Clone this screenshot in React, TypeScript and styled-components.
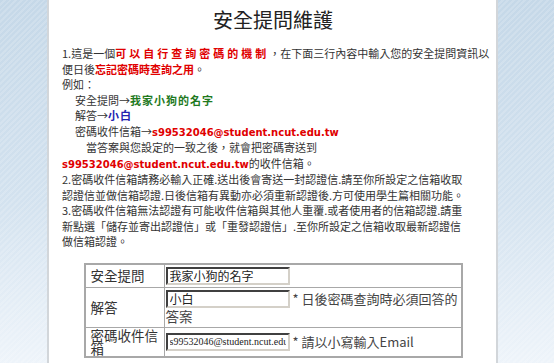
import React from 'react';
import styled, { createGlobalStyle } from 'styled-components';

const GlobalStyle = createGlobalStyle`
  html, body {
    margin: 0;
    padding: 0;
  }
  body {
    font-family: "Noto Sans CJK TC", "Liberation Sans", sans-serif;
    color: #333;
  }
`;

const Page = styled.div`
  min-height: 100vh;
  box-sizing: border-box;
  padding-left: 47px;
  display: flex;
  background:
    repeating-linear-gradient(-45deg, rgba(255, 255, 255, 0.16) 0 2px, rgba(255, 255, 255, 0) 2px 4px),
    linear-gradient(to bottom, #c5d8e8 0%, #d3e2ef 55%, #eef4fa 100%);
`;

const Panel = styled.div`
  width: 451px;
  min-height: 100vh;
  background: #fff;
  border-left: 2px solid #d2d6da;
  border-right: 2px solid #d2d6da;
  box-sizing: border-box;
  padding: 8px 12px 0 13px;
`;

const Title = styled.h1`
  margin: 0 0 14px;
  text-align: center;
  font-size: 20px;
  font-weight: 400;
  line-height: 24px;
  color: #222;
`;

const Notes = styled.div`
  font-size: 11px;
  line-height: 15.5px;
  color: #333;
`;

const Line = styled.div<{ indent?: number }>`
  white-space: nowrap;
  padding-left: ${({ indent }) => indent || 0}px;
`;

const Mark = styled.span<{ color: string; spacing?: number }>`
  color: ${({ color }) => color};
  font-weight: 700;
  letter-spacing: ${({ spacing }) => spacing || 0}px;
`;

const Email = styled.span`
  color: #e00000;
  font-family: "DejaVu Sans", sans-serif;
  font-weight: 700;
  font-size: 10px;
`;

const FormTable = styled.table`
  margin: 13px auto 0;
  width: 379px;
  border-collapse: collapse;
  border: 2px solid #a8a8a8;
  font-size: 13.5px;
  color: #333;
`;

const Label = styled.td`
  width: 68px;
  border: 1px solid #a8a8a8;
  padding: 1px 5px;
  line-height: 13px;
  vertical-align: middle;
`;

const Field = styled.td`
  border: 1px solid #a8a8a8;
  padding: 2px 1px;
  line-height: 18px;
  color: #444;
  font-size: 13px;
  white-space: nowrap;
`;

const Input = styled.input<{ small?: boolean }>`
  width: 124px;
  height: 18px;
  box-sizing: border-box;
  margin: 0 3px 0 0;
  padding: 0 2px;
  vertical-align: top;
  border-style: solid;
  border-width: 2px;
  border-color: #404040 #d4d0c8 #d4d0c8 #404040;
  background: #fff;
  color: #222;
  font-family: ${({ small }) => (small ? '"Liberation Serif", serif' : '"Noto Sans CJK TC", sans-serif')};
  font-size: ${({ small }) => (small ? '10px' : '12px')};
`;

const Wrap = styled.div`
  font-size: 13.5px;
  line-height: 17px;
`;

const App: React.FC = () => (
  <Page>
    <GlobalStyle />
    <Panel>
      <Title>安全提問維護</Title>
      <Notes>
        <Line>
          1.這是一個<Mark color="#e00000" spacing={3}>可以自行查詢密碼的機制</Mark>，在下面三行內容中輸入您的安全提問資訊以
        </Line>
        <Line>
          便日後<Mark color="#e00000">忘記密碼時查詢之用</Mark>。
        </Line>
        <Line>例如：</Line>
        <Line indent={13}>
          安全提問→<Mark color="#1f7a1f" spacing={1}>我家小狗的名字</Mark>
        </Line>
        <Line indent={13}>
          解答→<Mark color="#2222b0" spacing={1}>小白</Mark>
        </Line>
        <Line indent={13}>
          密碼收件信箱→<Email>s99532046@student.ncut.edu.tw</Email>
        </Line>
        <Line indent={24}>當答案與您設定的一致之後，就會把密碼寄送到</Line>
        <Line>
          <Email>s99532046@student.ncut.edu.tw</Email>的收件信箱。
        </Line>
        <Line>2.密碼收件信箱請務必輸入正確.送出後會寄送一封認證信.請至你所設定之信箱收取</Line>
        <Line>認證信並做信箱認證.日後信箱有異動亦必須重新認證後.方可使用學生篇相關功能。</Line>
        <Line>3.密碼收件信箱無法認證有可能收件信箱與其他人重覆.或者使用者的信箱認證.請重</Line>
        <Line>新點選「儲存並寄出認證信」或「重發認證信」.至你所設定之信箱收取最新認證信</Line>
        <Line>做信箱認證。</Line>
      </Notes>
      <FormTable>
        <tbody>
          <tr>
            <Label>安全提問</Label>
            <Field>
              <Input defaultValue="我家小狗的名字" />
            </Field>
          </tr>
          <tr>
            <Label>解答</Label>
            <Field>
              <Input defaultValue="小白" />* 日後密碼查詢時必須回答的
              <Wrap>答案</Wrap>
            </Field>
          </tr>
          <tr>
            <Label>密碼收件信箱</Label>
            <Field>
              <Input small defaultValue="s99532046@student.ncut.edu.tw" />* 請以小寫輸入Email
            </Field>
          </tr>
        </tbody>
      </FormTable>
    </Panel>
  </Page>
);

export default App;
